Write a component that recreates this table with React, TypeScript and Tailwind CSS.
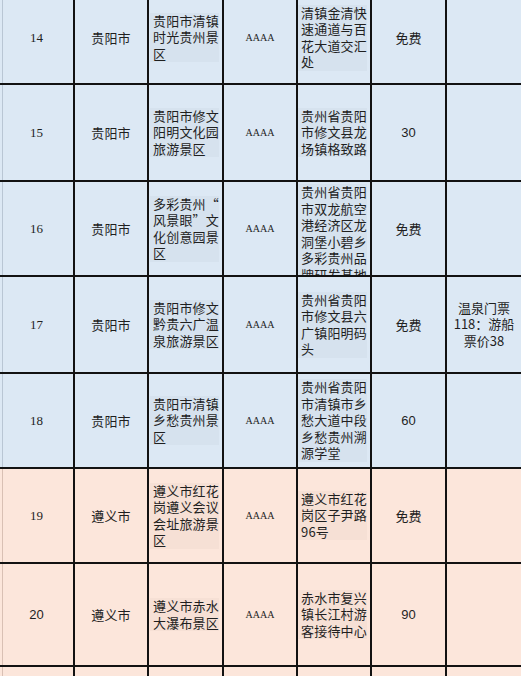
import React from "react";

type Tone = "blue" | "peach";

type Row = {
  n: string;
  serif?: boolean;
  city: string;
  name: string[];
  level: string;
  addr: string[];
  addrTop?: boolean;
  price: string;
  note: string[];
  tone: Tone;
};

const rows: Row[] = [
  {
    n: "14",
    serif: true,
    city: "贵阳市",
    name: ["贵阳市清镇", "时光贵州景", "区"],
    level: "AAAA",
    addr: ["清镇金清快", "速通道与百", "花大道交汇", "处"],
    price: "免费",
    note: [],
    tone: "blue",
  },
  {
    n: "15",
    serif: true,
    city: "贵阳市",
    name: ["贵阳市修文", "阳明文化园", "旅游景区"],
    level: "AAAA",
    addr: ["贵州省贵阳", "市修文县龙", "场镇格致路"],
    price: "30",
    note: [],
    tone: "blue",
  },
  {
    n: "16",
    serif: true,
    city: "贵阳市",
    name: ["多彩贵州“", "风景眼”文", "化创意园景", "区"],
    level: "AAAA",
    addr: ["贵州省贵阳", "市双龙航空", "港经济区龙", "洞堡小碧乡", "多彩贵州品", "牌研发基地"],
    addrTop: true,
    price: "免费",
    note: [],
    tone: "blue",
  },
  {
    n: "17",
    serif: true,
    city: "贵阳市",
    name: ["贵阳市修文", "黔贵六广温", "泉旅游景区"],
    level: "AAAA",
    addr: ["贵州省贵阳", "市修文县六", "广镇阳明码", "头"],
    price: "免费",
    note: ["温泉门票", "118：游船", "票价38"],
    tone: "blue",
  },
  {
    n: "18",
    serif: true,
    city: "贵阳市",
    name: ["贵阳市清镇", "乡愁贵州景", "区"],
    level: "AAAA",
    addr: ["贵州省贵阳", "市清镇市乡", "愁大道中段", "乡愁贵州溯", "源学堂"],
    price: "60",
    note: [],
    tone: "blue",
  },
  {
    n: "19",
    serif: true,
    city: "遵义市",
    name: ["遵义市红花", "岗遵义会议", "会址旅游景", "区"],
    level: "AAAA",
    addr: ["遵义市红花", "岗区子尹路", "96号"],
    price: "免费",
    note: [],
    tone: "peach",
  },
  {
    n: "20",
    city: "遵义市",
    name: ["遵义市赤水", "大瀑布景区"],
    level: "AAAA",
    addr: ["赤水市复兴", "镇长江村游", "客接待中心"],
    price: "90",
    note: [],
    tone: "peach",
  },
];

const cjk = "font-['Noto_Sans_CJK_SC',sans-serif]";

const toneBg = (t: Tone) => (t === "blue" ? "bg-[#dce8f4]" : "bg-[#fce6db]");

const Cell = ({
  tone,
  first,
  top,
  children,
}: {
  tone: Tone;
  first?: boolean;
  top?: boolean;
  children?: React.ReactNode;
}) => (
  <div
    className={`${toneBg(tone)} flex flex-col overflow-hidden text-[#1f1f1f] ${
      top ? "justify-start pt-[2px]" : "justify-center"
    } ${
      first
        ? tone === "blue"
          ? "shadow-[inset_2px_0_0_#dce8f4,inset_3px_0_0_#b9c6d4]"
          : "shadow-[inset_2px_0_0_#fce6db,inset_3px_0_0_#d9c0b4]"
        : ""
    }`}
  >
    {children}
  </div>
);

// multi-line name / address block, wrapped at five characters as in the sheet
const Lines = ({ lines }: { lines: string[] }) => (
  <div
    className={`${cjk} w-fit bg-black/[0.025] pl-[3px] text-[13px] leading-[16.5px] tracking-[0.2px]`}
  >
    {lines.map((l, i) => (
      <div key={i} className="whitespace-nowrap">
        {l}
      </div>
    ))}
  </div>
);

export default function App() {
  return (
    <div className="h-[676px] w-[521px] overflow-hidden bg-[#fce6db]">
      <div className="-mt-[8px] grid grid-cols-[73px_72px_73px_72px_72px_73px_74px] grid-rows-[91px_95px_93px_95px_93px_93px_101px_95px] gap-[2px] bg-[#121212]">
        {rows.map((r) => (
          <React.Fragment key={r.n}>
            <Cell tone={r.tone} first>
              <div
                className={`text-center text-[13px] ${
                  r.serif
                    ? "font-['Liberation_Serif',serif]"
                    : "font-['Liberation_Sans',sans-serif]"
                }`}
              >
                {r.n}
              </div>
            </Cell>
            <Cell tone={r.tone}>
              <div className={`${cjk} text-center text-[13px] tracking-[0.2px]`}>{r.city}</div>
            </Cell>
            <Cell tone={r.tone}>
              <div className="pl-[1px]">
                <Lines lines={r.name} />
              </div>
            </Cell>
            <Cell tone={r.tone}>
              <div className="text-center font-['Liberation_Serif',serif] text-[10px]">
                {r.level}
              </div>
            </Cell>
            <Cell tone={r.tone} top={r.addrTop}>
              <Lines lines={r.addr} />
            </Cell>
            <Cell tone={r.tone}>
              <div
                className={`text-center text-[13px] ${
                  /^\d+$/.test(r.price) ? "font-['Liberation_Sans',sans-serif]" : cjk
                }`}
              >
                {r.price}
              </div>
            </Cell>
            <Cell tone={r.tone}>
              <div className={`${cjk} text-center text-[13px] leading-[16.5px]`}>
                {r.note.map((l, i) => (
                  <div key={i}>{l}</div>
                ))}
              </div>
            </Cell>
          </React.Fragment>
        ))}
        {Array.from({ length: 7 }).map((_, i) => (
          <Cell key={`e${i}`} tone="peach" first={i === 0} />
        ))}
      </div>
    </div>
  );
}
